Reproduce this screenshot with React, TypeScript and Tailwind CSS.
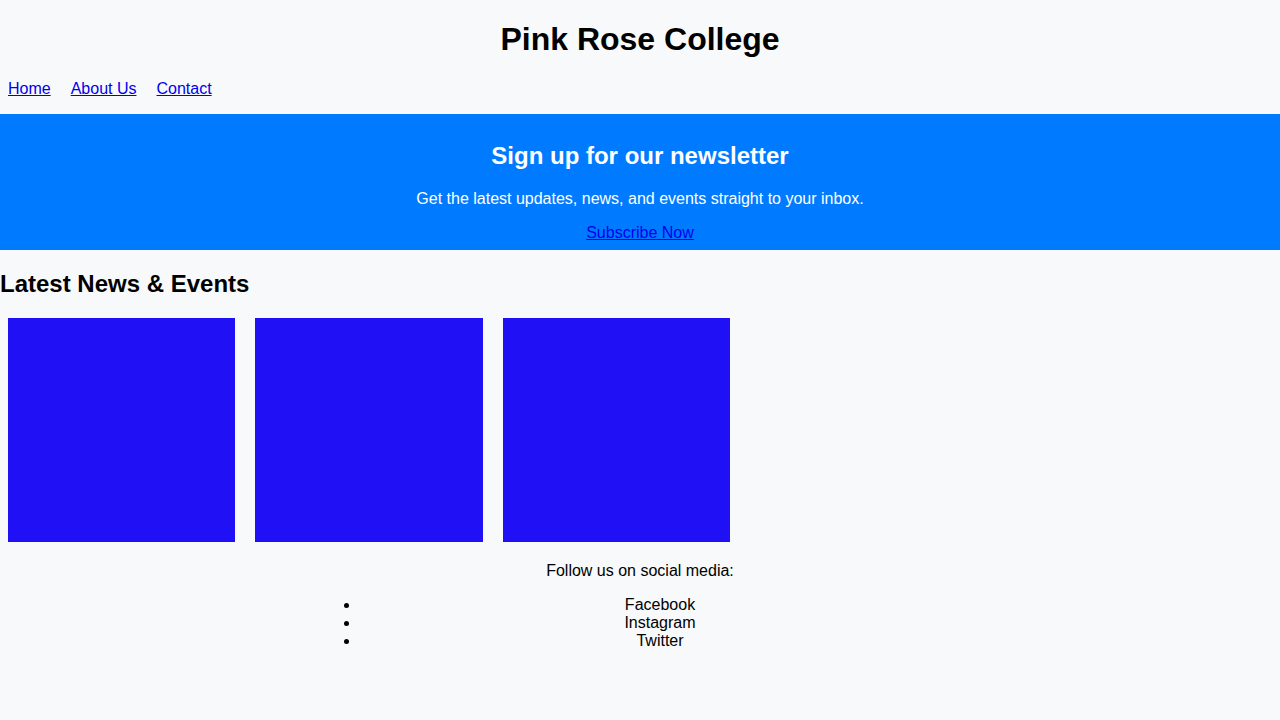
export default function App() {
  const cards = [1, 2, 3];
  return (
    <div className="min-h-[720px] bg-[#f8f9fa] text-black font-['Liberation_Sans',Arial,sans-serif] text-base leading-[normal]">
      {/* Header */}
      <header className="flow-root">
        <h1 className="my-[21.44px] text-center text-[32px] font-bold leading-[normal]">Pink Rose College</h1>
        <nav>
          <ul className="mb-4 flex gap-5 px-2">
            <li>
              <a href="#" className="text-[#0000ee] underline">Home</a>
            </li>
            <li>
              <a href="#" className="text-[#0000ee] underline">About Us</a>
            </li>
            <li>
              <a href="#" className="text-[#0000ee] underline">Contact</a>
            </li>
          </ul>
        </nav>
      </header>

      {/* Newsletter */}
      <section className="flow-root bg-[#007bff] py-2 text-center text-white">
        <h2 className="my-[19.92px] text-2xl font-bold leading-[normal]">Sign up for our newsletter</h2>
        <p className="my-4">Get the latest updates, news, and events straight to your inbox.</p>
        <a href="#" className="text-[#0000ee] underline">Subscribe Now</a>
      </section>

      {/* News */}
      <section className="flow-root">
        <h2 className="my-[19.92px] text-2xl font-bold leading-[normal]">Latest News &amp; Events</h2>
        <div className="flex gap-5 px-2">
          {cards.map((c) => (
            <div key={c} className="h-[224px] w-[227.4px] bg-[#1f10f5]" />
          ))}
        </div>
      </section>

      {/* Footer */}
      <footer className="flow-root pt-[4px] text-center">
        <p className="my-4">Follow us on social media:</p>
        <ul className="mx-auto w-[640px] list-disc pl-10">
          <li>Facebook</li>
          <li>Instagram</li>
          <li>Twitter</li>
        </ul>
      </footer>
    </div>
  );
}
